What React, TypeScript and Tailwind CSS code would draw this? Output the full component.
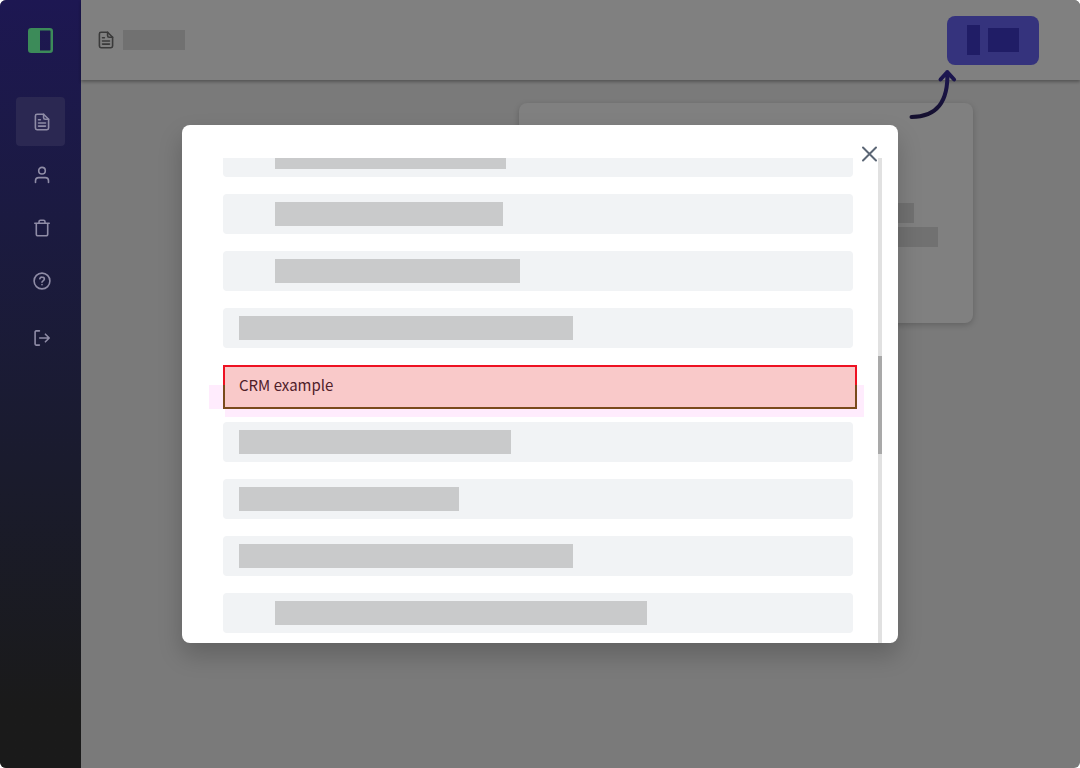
import { type ReactNode } from 'react'
import { clsx } from 'clsx'

interface NavItem {
  label: string
  icon: ReactNode
  active?: boolean
  last?: boolean
}

interface Row {
  id: number
  width?: number
  nested?: boolean
  title?: string
}

function Icon({ children }: { children: ReactNode }) {
  return (
    <svg
      viewBox="0 0 18 18"
      fill="none"
      stroke="currentColor"
      strokeWidth="1.6"
      strokeLinecap="round"
      strokeLinejoin="round"
      className="size-[18px] shrink-0"
      aria-hidden="true"
    >
      {children}
    </svg>
  )
}

const documentPaths = (
  <>
    <path d="M10.6 1.3H4A1.6 1.6 0 0 0 2.4 2.9v12.2A1.6 1.6 0 0 0 4 16.7h10a1.6 1.6 0 0 0 1.6-1.6V6.2Z" />
    <path d="M10.6 1.3v3.4a1.5 1.5 0 0 0 1.5 1.5h3.5M5.5 6.7h1.9M5.5 10h7M5.5 13.1h7" />
  </>
)

const navItems: NavItem[] = [
  { label: 'Documents', icon: <Icon>{documentPaths}</Icon>, active: true },
  {
    label: 'Profile',
    icon: (
      <Icon>
        <circle cx="9" cy="4.7" r="3.3" />
        <path d="M2.5 16.4v-1.6a3.2 3.2 0 0 1 3.2-3.2h6.6a3.2 3.2 0 0 1 3.2 3.2v1.6" />
      </Icon>
    ),
  },
  {
    label: 'Trash',
    icon: (
      <Icon>
        <path d="M1.8 4.3h14.4M3.3 4.3v11a1.5 1.5 0 0 0 1.5 1.5h8.4a1.5 1.5 0 0 0 1.5-1.5v-11M6 4.3V2.8a1.5 1.5 0 0 1 1.5-1.5h3A1.5 1.5 0 0 1 12 2.8v1.5" />
      </Icon>
    ),
  },
  {
    label: 'Help',
    icon: (
      <Icon>
        <circle cx="9" cy="9" r="7.9" />
        <path d="M6.8 6.8A2.2 2.2 0 0 1 9 5.1c1.4 0 2.4.8 2.4 2 0 1.7-2.4 1.7-2.4 3.1M9 12.6v.1" />
      </Icon>
    ),
  },
  {
    label: 'Log out',
    icon: (
      <Icon>
        <path d="M6.4 1.9H3.1a1 1 0 0 0-1 1v12.2a1 1 0 0 0 1 1h3.3M6.7 9h9.4M12.4 5.2 16.2 9l-3.8 3.8" />
      </Icon>
    ),
    last: true,
  },
]

const rows: Row[] = [
  { id: 1, width: 231, nested: true },
  { id: 2, width: 228, nested: true },
  { id: 3, width: 245, nested: true },
  { id: 4, width: 334 },
  { id: 5, title: 'CRM example' },
  { id: 6, width: 272 },
  { id: 7, width: 220 },
  { id: 8, width: 334 },
  { id: 9, width: 372, nested: true },
]

function Sidebar() {
  return (
    <aside className="flex w-[81px] shrink-0 flex-col items-center bg-linear-to-b from-[#1d1752] to-[#1a1a1a] to-92% text-[#8f8ca6]">
      <div className="flex h-[81px] items-center">
        <svg viewBox="0 0 25 25" className="size-[25px] text-[#3c8b59]" aria-hidden="true">
          <rect x="1.25" y="1.25" width="22.5" height="22.5" rx="2" fill="none" stroke="currentColor" strokeWidth="2.5" />
          <path d="M2 2h10v21H2z" fill="currentColor" />
        </svg>
      </div>
      <nav className="mt-4 flex flex-col gap-1">
        {navItems.map((item) => (
          <button
            key={item.label}
            aria-label={item.label}
            className={clsx(
              'flex size-[49px] items-center justify-center rounded pl-0.5',
              item.active && 'bg-[#2b2852]',
              item.last && 'mt-1'
            )}
          >
            {item.icon}
          </button>
        ))}
      </nav>
    </aside>
  )
}

function Header() {
  return (
    <header className="flex h-20 items-center justify-between bg-[#808080] pr-[41px] pl-4 shadow-[0_2px_3px_rgba(0,0,0,0.3)]">
      <div className="flex items-center gap-2 text-[#3a3a3a]">
        <Icon>{documentPaths}</Icon>
        <div className="h-5 w-[62px] bg-[#717171]" />
      </div>
      <button aria-label="New document" className="flex h-[49px] w-[92px] items-center justify-center gap-2 rounded-lg bg-[#35337d]">
        <span className="h-[30px] w-[13px] bg-[#201d66]" />
        <span className="h-6 w-[31px] bg-[#201d66]" />
      </button>
    </header>
  )
}

function EmptyCard() {
  return (
    <section className="relative flex h-[220px] w-[454px] flex-col items-end gap-1 rounded-lg bg-[#808080] pt-[100px] pr-[35px] shadow-[0_2px_6px_rgba(0,0,0,0.2)]">
      <div className="mr-6 h-5 w-[336px] bg-[#717171]" />
      <div className="h-5 w-[384px] bg-[#717171]" />
      <svg viewBox="0 0 50 54" className="absolute -top-9 right-4 h-[54px] w-[50px]" fill="none" aria-hidden="true">
        <defs>
          <linearGradient id="arrow" x1="0" y1="1" x2="0" y2="0">
            <stop offset="0" stopColor="#15102f" />
            <stop offset="1" stopColor="#1c1652" />
          </linearGradient>
        </defs>
        <path
          d="M4.5 50c25 0 37-15 35.8-45M33.5 12.5 40.3 5l6.8 7.5"
          stroke="url(#arrow)"
          strokeWidth="4"
          strokeLinecap="round"
          strokeLinejoin="round"
        />
      </svg>
    </section>
  )
}

function ListRow({ row }: { row: Row }) {
  if (row.title) {
    return (
      <li className="relative h-10 rounded bg-[#f1f3f5]">
        <button className="block h-full w-full px-4 text-left text-[15px] leading-10 text-[#4f2029]">
          <span className="relative z-10">{row.title}</span>
        </button>
        {/* selection glow and frame */}
        <div className="absolute top-5 -left-3.5 h-6 w-3.5 bg-[#ffecfd]" />
        <div className="absolute top-5 -right-[11px] left-0.5 h-8 bg-[#ffecfd]" />
        <div className="absolute top-0 -right-1 left-0 h-11 border-2 border-[#7a4a1c] bg-[#f9c9c9]">
          <div className="-mx-0.5 -mt-0.5 h-5 border-x-2 border-t-2 border-[#ee1122]" />
        </div>
      </li>
    )
  }
  return (
    <li className="h-10 rounded bg-[#f1f3f5]">
      <button
        aria-label={`Entry ${row.id}`}
        className={clsx('flex h-full w-full items-center', row.nested ? 'pl-[52px]' : 'pl-4')}
      >
        <span className="h-6 bg-[#c9cacb]" style={{ width: row.width }} />
      </button>
    </li>
  )
}

function PickerDialog() {
  return (
    <div className="fixed inset-0 flex justify-center px-6 py-[125px]">
      <div
        role="dialog"
        aria-modal="true"
        aria-label="Choose an entry"
        className="relative flex w-full max-w-[716px] flex-col rounded-lg bg-white pt-[33px] pr-4 pl-[41px] shadow-[0_12px_24px_rgba(0,0,0,0.2)]"
      >
        <button aria-label="Close" className="absolute top-5 right-5 text-[#5b6675]">
          <svg viewBox="0 0 18 18" className="size-[18px]" stroke="currentColor" strokeWidth="2" strokeLinecap="round" aria-hidden="true">
            <path d="M3 2.5l13 13M16 2.5l-13 13" />
          </svg>
        </button>
        <div className="flex min-h-0 flex-1">
          <div className="-ml-[14px] flex flex-1 flex-col justify-end overflow-hidden pr-[25px] pb-[10px] pl-[14px]">
            <ul className="flex flex-col gap-[17px]">
              {rows.map((row) => (
                <ListRow key={row.id} row={row} />
              ))}
            </ul>
          </div>
          <div className="flex w-1 flex-col bg-[#e1e1e1]">
            <div className="mt-[198px] h-[98px] bg-[#a9a9a9]" />
          </div>
        </div>
      </div>
    </div>
  )
}

export default function App() {
  return (
    <div className="bg-white font-['Noto_Sans_CJK_SC','Noto_Sans',sans-serif]">
      <div className="flex min-h-screen overflow-hidden rounded-md bg-[#7a7a7a]">
        <Sidebar />
        <div className="flex min-w-0 flex-1 flex-col">
          <Header />
          <main className="flex justify-end pt-[23px] pr-[107px]">
            <EmptyCard />
          </main>
        </div>
      </div>
      <PickerDialog />
    </div>
  )
}
